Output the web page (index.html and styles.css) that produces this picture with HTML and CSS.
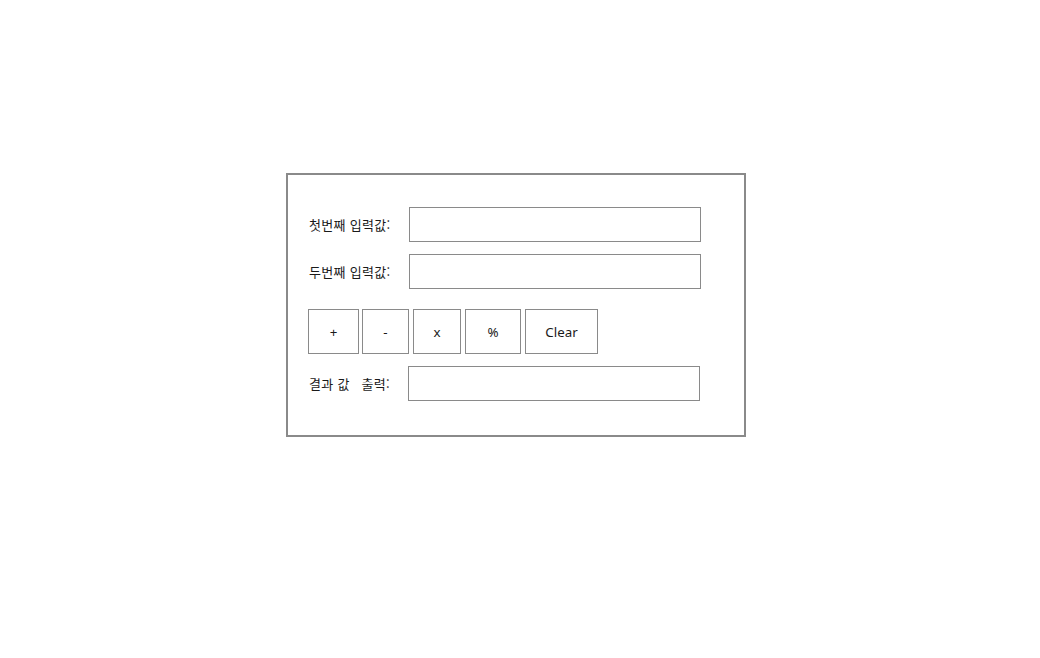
FILE: index.html
```html
<!DOCTYPE html>
<html lang="ko">
<head>
<meta charset="utf-8">
<title>계산기</title>
<link rel="stylesheet" href="styles.css">
</head>
<body>
<div class="calc">
  <div class="row row-first">
    <label class="label">첫번째 입력값:</label>
    <input class="field" type="text">
  </div>
  <div class="row row-second">
    <label class="label">두번째 입력값:</label>
    <input class="field" type="text">
  </div>
  <div class="buttons">
    <button class="btn btn-plus">+</button>
    <button class="btn btn-minus">-</button>
    <button class="btn btn-mul">x</button>
    <button class="btn btn-mod">%</button>
    <button class="btn btn-clear">Clear</button>
  </div>
  <div class="row row-result">
    <label class="label label-result">결과 값&nbsp;&nbsp;&nbsp;출력:</label>
    <input class="field" type="text">
  </div>
</div>
</body>
</html>
```
FILE: styles.css
```css
html, body {
  margin: 0;
  padding: 0;
  background: #ffffff;
}
body {
  font-family: "Noto Sans", "Noto Sans CJK KR", sans-serif;
  font-size: 13px;
  color: #1a1a1a;
}
.calc {
  box-sizing: border-box;
  width: 460px;
  height: 264px;
  margin: 173px 0 0 286px;
  border: 2px solid #8a8a8a;
  padding: 32px 20px 34px 20px;
  display: flex;
  flex-direction: column;
}
.row {
  display: flex;
  align-items: center;
  height: 35px;
}
.row-first {
  margin-bottom: 12px;
}
.row-second {
  margin-bottom: 20px;
}
.label {
  width: 101px;
  flex: none;
  font-family: "Noto Sans CJK KR", sans-serif;
  font-size: 13px;
  line-height: 16px;
  padding-left: 1px;
  box-sizing: border-box;
  white-space: nowrap;
  letter-spacing: 0.3px;
}
.label-result {
  width: 100px;
}
.field {
  box-sizing: border-box;
  width: 292px;
  height: 35px;
  margin: 0;
  border: 1px solid #8a8a8a;
  border-radius: 0;
  padding: 0 4px;
  background: #fff;
  outline: none;
}
.buttons {
  display: flex;
  height: 45px;
  margin-bottom: 12px;
}
.btn {
  box-sizing: border-box;
  height: 45px;
  margin: 0;
  padding: 0;
  border: 1px solid #8a8a8a;
  border-radius: 0;
  background: #ffffff;
  color: #1a1a1a;
  font-family: "Noto Sans", sans-serif;
  font-size: 13.33px;
  line-height: 16px;
  flex: none;
}
.btn-plus { width: 51px; margin-right: 3px; }
.btn-minus { width: 47px; margin-right: 4px; }
.btn-mul { width: 48px; margin-right: 4px; }
.btn-mod { width: 56px; margin-right: 4px; }
.btn-clear { width: 73px; }
```
